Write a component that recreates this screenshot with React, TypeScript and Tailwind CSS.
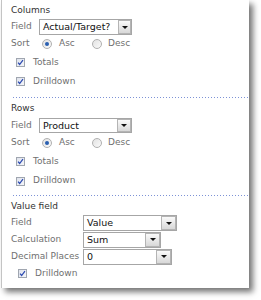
import { ReactNode } from "react";

type SelectProps = {
  value: string;
  width: string;
  button: string;
  height?: string;
};

function FakeSelect({ value, width, button, height = "h-[16px]" }: SelectProps) {
  return (
    <div
      className={`flex ${width} ${height} items-stretch border border-[#a6a6a6] bg-white`}
    >
      <span className="flex flex-1 items-center pl-[3px] text-[9.5px] leading-none text-[#111]">
        {value}
      </span>
      <span
        className={`flex ${button} items-center justify-center border border-[#b4b4b4] bg-gradient-to-b from-[#fafafa] to-[#d8d8d8]`}
      >
        <span className="h-0 w-0 border-x-[3px] border-t-[3px] border-x-transparent border-t-[#111]" />
      </span>
    </div>
  );
}

function Checkbox() {
  return (
    <span className="flex h-[9px] w-[9px] items-center justify-center border border-[#a0a6b0] bg-gradient-to-br from-[#dfe3ec] to-[#f4f6fa]">
      <svg viewBox="0 0 8 8" className="h-[7px] w-[7px]">
        <path d="M1.2 4.2 L3 6.3 L6.8 1.2" fill="none" stroke="#2a48b0" strokeWidth="1.4" />
      </svg>
    </span>
  );
}

function Radio({ checked }: { checked?: boolean }) {
  return (
    <span className="flex h-[10px] w-[10px] items-center justify-center rounded-full border border-[#b0b0b0] bg-gradient-to-br from-[#e2e2e2] to-[#fafafa]">
      {checked ? <span className="h-[4px] w-[4px] rounded-full bg-[#2a5fb0]" /> : null}
    </span>
  );
}

function Row({ h, children, className = "" }: { h: string; children: ReactNode; className?: string }) {
  return <div className={`flex ${h} items-center ${className}`}>{children}</div>;
}

function Divider() {
  return (
    <div className="ml-[2px] h-[1px] bg-[repeating-linear-gradient(90deg,#7d92d6_0_1px,transparent_1px_3px)]" />
  );
}

function SortRow({ h }: { h: string }) {
  return (
    <Row h={h}>
      <span className="w-[31px]">Sort</span>
      <Radio checked />
      <span className="ml-[7px] w-[33px]">Asc</span>
      <Radio />
      <span className="ml-[6px]">Desc</span>
    </Row>
  );
}

function CheckRow({ h, label, indent }: { h: string; label: string; indent: string }) {
  return (
    <Row h={h} className={indent}>
      <Checkbox />
      <span className="ml-[8px]">{label}</span>
    </Row>
  );
}

export default function App() {
  return (
    <div className="h-[300px] w-[261px] bg-white">
      <div
        className="ml-[1px] flex h-[288px] w-[248px] flex-col border-l border-[#c4c4c4] bg-white pl-[9px] text-[9px] text-[#707070] shadow-[4px_4px_6px_rgba(0,0,0,0.55)]"
        style={{ fontFamily: '"DejaVu Sans", Verdana, sans-serif' }}
      >
        {/* Columns */}
        <Row h="h-[16px]" className="mt-[3px] text-[#333]">Columns</Row>
        <Row h="h-[16px]">
          <span className="w-[28px]">Field</span>
          <FakeSelect value="Actual/Target?" width="w-[93px]" button="w-[13px]" />
        </Row>
        <SortRow h="h-[18px]" />
        <CheckRow h="h-[19px]" label="Totals" indent="pl-[5px]" />
        <CheckRow h="h-[19px]" label="Drilldown" indent="pl-[5px]" />
        <div className="h-[6px]" />
        <Divider />

        {/* Rows */}
        <Row h="h-[16px]" className="mt-[3px] text-[#333]">Rows</Row>
        <Row h="h-[17px]">
          <span className="w-[28px]">Field</span>
          <FakeSelect value="Product" width="w-[93px]" button="w-[14px]" height="h-[15px]" />
        </Row>
        <SortRow h="h-[18px]" />
        <CheckRow h="h-[19px]" label="Totals" indent="pl-[5px]" />
        <CheckRow h="h-[20px]" label="Drilldown" indent="pl-[5px]" />
        <div className="h-[4px]" />
        <Divider />

        {/* Value field */}
        <Row h="h-[16px]" className="mt-[3px] text-[#333]">Value field</Row>
        <Row h="h-[16px]">
          <span className="w-[72px]">Field</span>
          <FakeSelect value="Value" width="w-[94px]" button="w-[15px]" />
        </Row>
        <Row h="h-[17px]">
          <span className="w-[72px]">Calculation</span>
          <FakeSelect value="Sum" width="w-[78px]" button="w-[15px]" />
        </Row>
        <Row h="h-[17px]">
          <span className="w-[72px]">Decimal Places</span>
          <FakeSelect value="0" width="w-[89px]" button="w-[15px]" />
        </Row>
        <CheckRow h="h-[17px]" label="Drilldown" indent="pl-[7px]" />
      </div>
    </div>
  );
}
